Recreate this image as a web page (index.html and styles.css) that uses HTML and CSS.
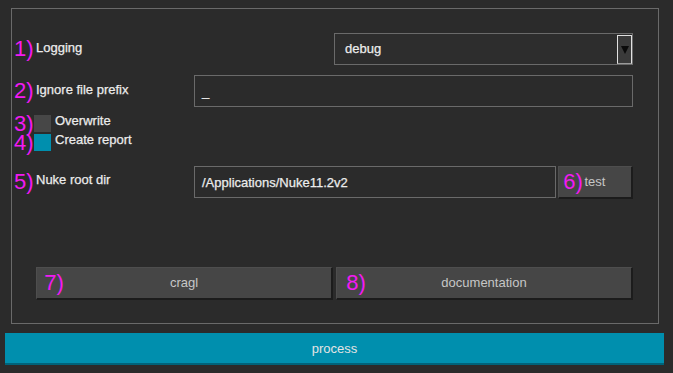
FILE: index.html
```html
<!DOCTYPE html>
<html>
<head>
<meta charset="utf-8">
<link rel="stylesheet" href="styles.css">
</head>
<body>
<div class="app">
  <div class="frame">
    <div class="row row-logging">
      <span class="num">1)</span>
      <span class="label">Logging</span>
      <div class="select">
        <span class="select-text">debug</span>
        <span class="select-arrow"><span class="tri"></span></span>
      </div>
    </div>
    <div class="row row-prefix">
      <span class="num">2)</span>
      <span class="label">Ignore file prefix</span>
      <div class="input input-wide"><span class="input-text">_</span></div>
    </div>
    <div class="checks">
      <div class="check-row">
        <span class="num">3)</span>
        <span class="box box-off"></span>
        <span class="check-label">Overwrite</span>
      </div>
      <div class="check-row">
        <span class="num">4)</span>
        <span class="box box-on"></span>
        <span class="check-label">Create report</span>
      </div>
    </div>
    <div class="row row-nuke">
      <span class="num">5)</span>
      <span class="label">Nuke root dir</span>
      <div class="input input-path"><span class="input-text">/Applications/Nuke11.2v2</span></div>
      <button class="btn btn-test"><span class="num num-btn">6)</span><span class="btn-text">test</span></button>
    </div>
    <div class="buttons">
      <button class="btn btn-wide"><span class="num num-abs">7)</span><span class="btn-text">cragl</span></button>
      <button class="btn btn-wide"><span class="num num-abs">8)</span><span class="btn-text">documentation</span></button>
    </div>
  </div>
  <button class="process">process</button>
</div>
</body>
</html>
```
FILE: styles.css
```css
html, body {
  margin: 0;
  padding: 0;
  background: #2b2b2b;
}
body {
  font-family: "Liberation Sans", Arial, sans-serif;
  font-size: 13px;
  color: #ececec;
}
.app {
  padding: 8px 0 0 5px;
  width: 659px;
}
.frame {
  margin-left: 6px;
  width: 648px;
  border: 1px solid #6a6a6a;
  padding: 24px 25px 0 2px;
  box-sizing: border-box;
  height: 316px;
}
.row {
  display: flex;
  align-items: center;
  height: 32px;
}
.num {
  font-size: 22px;
  color: #f21af2;
  line-height: 22px;
  width: 22px;
  flex: none;
}
.label, .check-label, .select-text {
  -webkit-text-stroke: 0.25px #ececec;
}
.label {
  width: 158px;
  flex: none;
  margin-top: -4px;
}
.row-logging .label {
  width: auto;
  flex: 1;
}
.select {
  width: 299px;
  height: 32px;
  box-sizing: border-box;
  border: 1px solid #6a6a6a;
  background: #2d2d2d;
  display: flex;
  align-items: center;
  justify-content: space-between;
  padding-left: 10px;
}
.select-text {
  margin-top: -2px;
}
.select-arrow {
  width: 15px;
  height: 29px;
  box-sizing: border-box;
  border: 1px solid #e0e0e0;
  border-bottom-color: #9a9a9a;
  background: #3a3a3a;
  display: flex;
  align-items: center;
  justify-content: center;
  margin-top: 1px;
}
.tri {
  width: 0;
  height: 0;
  border-left: 4px solid transparent;
  border-right: 4px solid transparent;
  border-top: 8px solid #0a0a0a;
}
.row-prefix {
  margin-top: 10px;
}
.input {
  height: 32px;
  box-sizing: border-box;
  border: 1px solid #6a6a6a;
  background: #2b2b2b;
  display: flex;
  align-items: center;
  padding-left: 7px;
}
.input-wide {
  width: 441px;
}
.input-path {
  width: 364px;
}
.input-text {
  margin-top: 1px;
  -webkit-text-stroke: 0.25px #ececec;
}
.checks {
  margin-top: 7px;
  display: flex;
  flex-direction: column;
}
.check-row {
  display: flex;
  align-items: center;
  height: 19px;
}
.check-row .num {
  width: 20px;
  line-height: 19px;
  height: 19px;
}
.box {
  width: 17px;
  height: 17px;
  flex: none;
}
.box-off { background: #474747; }
.box-on { background: #008fae; }
.check-label {
  margin-left: 4px;
  margin-top: -6px;
}
.row-nuke {
  margin-top: 13px;
  height: 33px;
}
.btn {
  font-family: "Liberation Sans", Arial, sans-serif;
  font-size: 13px;
  color: #c6c6c6;
  background: #464646;
  border: none;
  border-right: 2px solid #1c1c1c;
  border-bottom: 2px solid #1c1c1c;
  border-top: 1px solid #4e4e4e;
  border-left: 1px solid #4e4e4e;
  box-sizing: border-box;
  margin: 0;
  padding: 0;
}
.btn-test {
  width: 76px;
  height: 33px;
  margin-left: 2px;
  display: flex;
  align-items: center;
  padding-left: 3px;
  margin-top: 1px;
}
.btn-test .num {
  width: 23px;
}
.btn-text {
  margin-top: -1px;
}
.buttons {
  display: flex;
  gap: 3px;
  margin-top: 69px;
  margin-left: 22px;
}
.btn-wide {
  position: relative;
  width: 298px;
  height: 33px;
  display: flex;
  align-items: center;
  justify-content: center;
}
.num-abs {
  position: absolute;
  left: 6px;
  top: 4px;
}
.buttons .btn-wide:nth-child(2) .num-abs {
  left: 8px;
}
.process {
  display: block;
  margin-top: 9px;
  width: 659px;
  height: 32px;
  background: #008fae;
  border: none;
  border-bottom: 2px solid #00637a;
  color: #e4e4e4;
  font-family: "Liberation Sans", Arial, sans-serif;
  font-size: 13px;
  padding: 0;
}
```
